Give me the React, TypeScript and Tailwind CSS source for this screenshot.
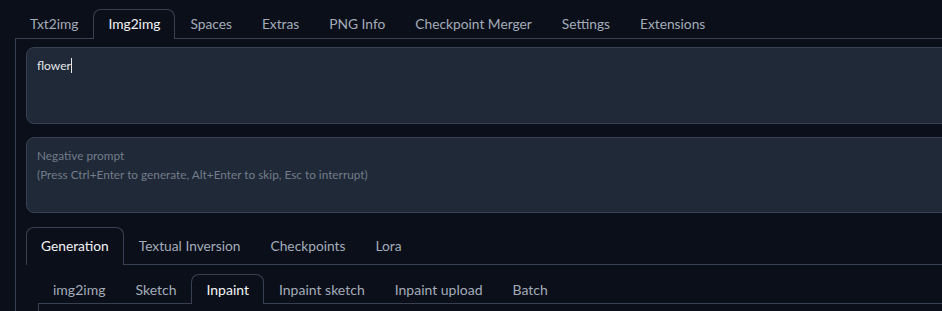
const topTabs = ["Txt2img", "Img2img", "Spaces", "Extras", "PNG Info", "Checkpoint Merger", "Settings", "Extensions"];
const genTabs = ["Generation", "Textual Inversion", "Checkpoints", "Lora"];
const subTabs = ["img2img", "Sketch", "Inpaint", "Inpaint sketch", "Inpaint upload", "Batch"];

const TabBar = ({
  tabs,
  active,
  height,
  size,
}: {
  tabs: string[];
  active: string;
  height: string;
  size: string;
}) => (
  <div className={`flex border-b border-[#374151] ${size}`}>
    {tabs.map((tab) =>
      tab === active ? (
        <div
          key={tab}
          className={`${height} -mb-px flex items-center px-[14px] text-[#f3f4f6] bg-[#0b0f19] border border-b-0 border-[#374151] rounded-t-lg`}
        >
          {tab}
        </div>
      ) : (
        <div
          key={tab}
          className={`${height} -mb-px flex items-center px-[14px] text-[#a3acb9] border border-transparent`}
        >
          {tab}
        </div>
      )
    )}
  </div>
);

export default function App() {
  return (
    <div
      className="w-[942px] h-[311px] overflow-hidden bg-[#0b0f19]"
      style={{ fontFamily: "Lato, 'Liberation Sans', sans-serif" }}
    >
      <div className="w-[1000px] pl-[15px] pt-[9px]">
        <TabBar tabs={topTabs} active="Img2img" height="h-[30px]" size="text-[13.75px]" />
        <div className="border-l border-[#374151] pl-[10px] pt-2">
          <div className="h-[77px] rounded-lg border border-[#374151] bg-[#1f2937] px-[10px] pt-[8px] text-[12px] leading-5 text-[#e5e7eb]">
            flower<span className="inline-block w-px h-[15px] align-[-3px] bg-[#e5e7eb]" />
          </div>
          <div className="mt-[13px] h-[76px] rounded-lg border border-[#374151] bg-[#1f2937] px-[10px] pt-[8px] text-[11.8px] leading-[19px] text-[#737c8a]">
            <div>Negative prompt</div>
            <div>(Press Ctrl+Enter to generate, Alt+Enter to skip, Esc to interrupt)</div>
          </div>
          <div className="mt-[14px]">
            <TabBar tabs={genTabs} active="Generation" height="h-[38px]" size="text-[13.75px]" />
            <div className="pl-[12px] pt-[9px]">
              <TabBar tabs={subTabs} active="Inpaint" height="h-[30px]" size="text-[14px]" />
              <div className="h-[20px] border-l border-[#374151]" />
            </div>
          </div>
        </div>
      </div>
    </div>
  );
}
